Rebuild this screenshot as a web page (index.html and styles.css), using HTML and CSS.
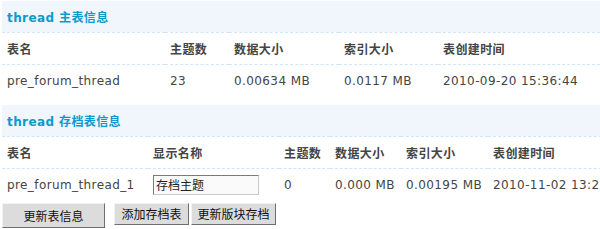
FILE: index.html
```html
<!DOCTYPE html>
<html>
<head>
<meta charset="utf-8">
<link rel="stylesheet" href="styles.css">
</head>
<body>
<div class="page">
  <table class="tb tb1">
    <colgroup><col class="c1"><col class="c2"><col class="c3"><col class="c4"><col class="c5"></colgroup>
    <tr class="title"><td colspan="5">thread 主表信息</td></tr>
    <tr class="head"><th>表名</th><th>主题数</th><th>数据大小</th><th>索引大小</th><th>表创建时间</th></tr>
    <tr class="row"><td>pre_forum_thread</td><td>23</td><td>0.00634 MB</td><td>0.0117 MB</td><td>2010-09-20 15:36:44</td></tr>
  </table>
  <table class="tb tb2">
    <colgroup><col class="d1"><col class="d2"><col class="d3"><col class="d4"><col class="d5"><col class="d6"></colgroup>
    <tr class="title"><td colspan="6">thread 存档表信息</td></tr>
    <tr class="head"><th>表名</th><th>显示名称</th><th>主题数</th><th>数据大小</th><th>索引大小</th><th>表创建时间</th></tr>
    <tr class="row2"><td>pre_forum_thread_1</td><td><input class="txt" type="text" value="存档主题"></td><td>0</td><td>0.000 MB</td><td>0.00195 MB</td><td>2010-11-02 13:22:10</td></tr>
  </table>
  <div class="btns">
    <button class="btn btn-main">更新表信息</button>
    <button class="btn btn-a">添加存档表</button>
    <button class="btn btn-b">更新版块存档</button>
  </div>
</div>
</body>
</html>
```

FILE: styles.css
```css
html, body {
  margin: 0;
  padding: 0;
  background: #fff;
  overflow: hidden;
}
body {
  font-family: "DejaVu Sans", "Noto Sans CJK SC", sans-serif;
  font-size: 12px;
  color: #444;
}
.page {
  padding: 1px 0 0 2px;
  width: 700px;
}
.tb {
  border-collapse: collapse;
  table-layout: fixed;
  letter-spacing: 0.4px;
}
.tb1 { width: 598px; }
.tb2 { width: 660px; margin-top: 8px; }
.tb td, .tb th {
  padding: 0 0 0 5px;
  text-align: left;
  white-space: nowrap;
  overflow: hidden;
}
.c1 { width: 163px; }
.c2 { width: 64px; }
.c3 { width: 110px; }
.c4 { width: 99px; }
.d1 { width: 146px; }
.d2 { width: 131px; }
.d3 { width: 51px; }
.d4 { width: 71px; }
.d5 { width: 87px; }
.title td {
  height: 31px;
  background: #f0f6fc;
  color: #0a9acb;
  font-weight: bold;
  font-size: 12px;
  border-bottom: 1px dashed #cfe5f8;
}
.head th {
  height: 31px;
  font-weight: bold;
  color: #444;
  border-bottom: 1px dashed #cfe5f8;
}
.row td {
  height: 32px;
}
.row2 td {
  height: 31px;
}
.txt {
  box-sizing: border-box;
  width: 106px;
  height: 20px;
  margin: 0;
  padding: 0 2px;
  border: 1px solid #7a7a7a;
  border-right-color: #c8c8c8;
  border-bottom-color: #c8c8c8;
  background: #fafafa;
  font-family: "Noto Sans CJK SC", sans-serif;
  font-size: 12px;
  color: #222;
  letter-spacing: 0;
}
.btns {
  display: flex;
  align-items: flex-start;
  margin-top: 3px;
}
.btn {
  box-sizing: border-box;
  margin: 0;
  background: #dcdcdc;
  border: 1px solid;
  border-color: #f4f4f4 #6e6e6e #6e6e6e #f4f4f4;
  font-family: "Noto Sans CJK SC", sans-serif;
  font-size: 12px;
  color: #111;
  padding: 0;
  line-height: 16px;
}
.btn-main {
  width: 103px;
  height: 25px;
}
.btn-a {
  width: 75px;
  height: 22px;
  margin-left: 9px;
}
.btn-b {
  width: 85px;
  height: 22px;
  margin-left: 2px;
}
```
